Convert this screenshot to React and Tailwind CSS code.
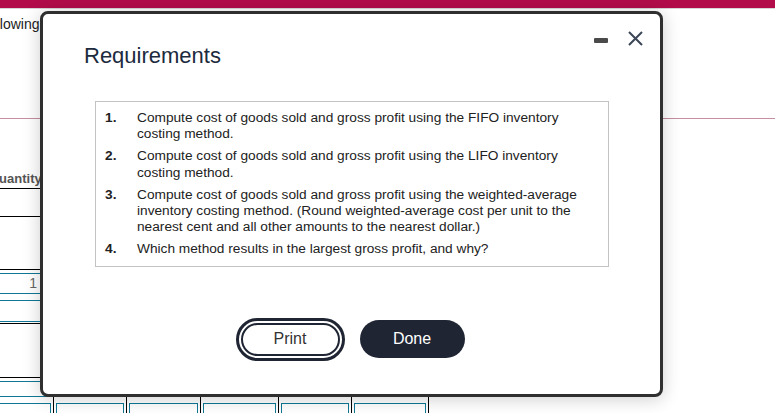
import React from 'react';

const colW = ['w-[73px]', 'w-[73px]', 'w-[74px]', 'w-[78px]', 'w-[73px]', 'w-[77px]'];

const requirements = [
  'Compute cost of goods sold and gross profit using the FIFO inventory costing method.',
  'Compute cost of goods sold and gross profit using the LIFO inventory costing method.',
  'Compute cost of goods sold and gross profit using the weighted-average inventory costing method. (Round weighted-average cost per unit to the nearest cent and all other amounts to the nearest dollar.)',
  'Which method results in the largest gross profit, and why?',
];

function Row({ className, children }) {
  return (
    <div className={`flex w-fit border-b border-black ${className}`}>
      {colW.map((w, i) => (
        <div key={i} className={`${w} shrink-0 border-r border-black`}>
          {children ? children(i) : null}
        </div>
      ))}
    </div>
  );
}

function BlueBox({ className, children }) {
  return (
    <div className={`border border-[#0f7896] ml-[2px] mr-[2px] ${className}`}>{children}</div>
  );
}

function Background() {
  return (
    <div className="text-[#222]">
      <div className="h-[8px] bg-[#b20c4b]" />
      <div className="h-px bg-[#d6d6d6]" />
      <div className="h-[109px] pt-[7px] -ml-[15px] text-[14px] leading-[16px]">following</div>
      <div className="h-px bg-[#c58ea3]" />
      <div className="-ml-[19px]">
        <Row className="h-[70px]">
          {i =>
            i === 0 ? (
              <div className="pt-[52px] pl-[8px] text-[13px] leading-[15px] font-bold text-[#555]">Quantity</div>
            ) : null
          }
        </Row>
        <Row className="h-[28px]" />
        <Row className="h-[53px]" />
        <Row className="h-[54px]">
          {i => (
            <div className="pt-[3px] flex flex-col gap-[6px]">
              <BlueBox className="h-[21px] text-right pr-[13px] text-[14px] leading-[19px] text-[#666]">
                {i === 0 ? '1' : ''}
              </BlueBox>
              <BlueBox className="h-[22px]" />
            </div>
          )}
        </Row>
        <Row className="h-[54px]" />
        <div className="flex w-fit">
          {colW.map((w, i) => (
            <div key={i} className={`${w} shrink-0 border-r border-black h-[40px] pt-[3px] flex flex-col gap-[6px]`}>
              <BlueBox className="h-[20px]" />
              <BlueBox className="h-[20px]" />
            </div>
          ))}
        </div>
      </div>
    </div>
  );
}

function Modal() {
  return (
    <div className="absolute left-[40px] top-[11px] w-[623px] h-[386px] rounded-[8px] border-[3px] border-[#2f2f2f] bg-white shadow-[0_2px_18px_rgba(0,0,0,0.2)]">
      <div className="flex justify-between items-start pl-[41px] pr-[17px]">
        <h2 className="mt-[29px] text-[22px] leading-[25px] text-[#1c2a3e]">Requirements</h2>
        <div className="mt-[17px] flex items-start gap-[20px]">
          <div className="mt-[7px] w-[14px] h-[5px] rounded-[1px] bg-[#4a4a4a]" />
          <svg width="15" height="15" viewBox="0 0 15 15">
            <path d="M1 1 L14 14 M14 1 L1 14" stroke="#3b4656" strokeWidth="2" fill="none" />
          </svg>
        </div>
      </div>

      <div className="ml-[52px] mt-[33px] w-[514px] h-[166px] border border-[#c3c3c3] pt-[8px] pl-[9px] pr-[12px] flex flex-col gap-[5.5px] text-[13.7px] leading-[16.4px] text-[#222]">
        {requirements.map((t, i) => (
          <div key={i} className="flex">
            <span className="w-[32px] shrink-0 font-bold">{i + 1}.</span>
            <span>{t}</span>
          </div>
        ))}
      </div>

      <div className="mt-[53px] flex justify-center items-center gap-[20px] pl-[2px]">
        <button className="w-[99px] h-[33px] rounded-full border-2 border-[#1f2533] outline-[3px] outline-solid outline-offset-[2px] outline-[#1f2533] text-[16px] text-[#333]">
          Print
        </button>
        <button className="w-[105px] h-[38px] rounded-full bg-[#1f2533] text-[16px] text-white">
          Done
        </button>
      </div>
    </div>
  );
}

export default function App() {
  return (
    <div className="relative w-[775px] h-[413px] overflow-hidden bg-white font-['Liberation_Sans',Arial,sans-serif]">
      <Background />
      <Modal />
    </div>
  );
}
